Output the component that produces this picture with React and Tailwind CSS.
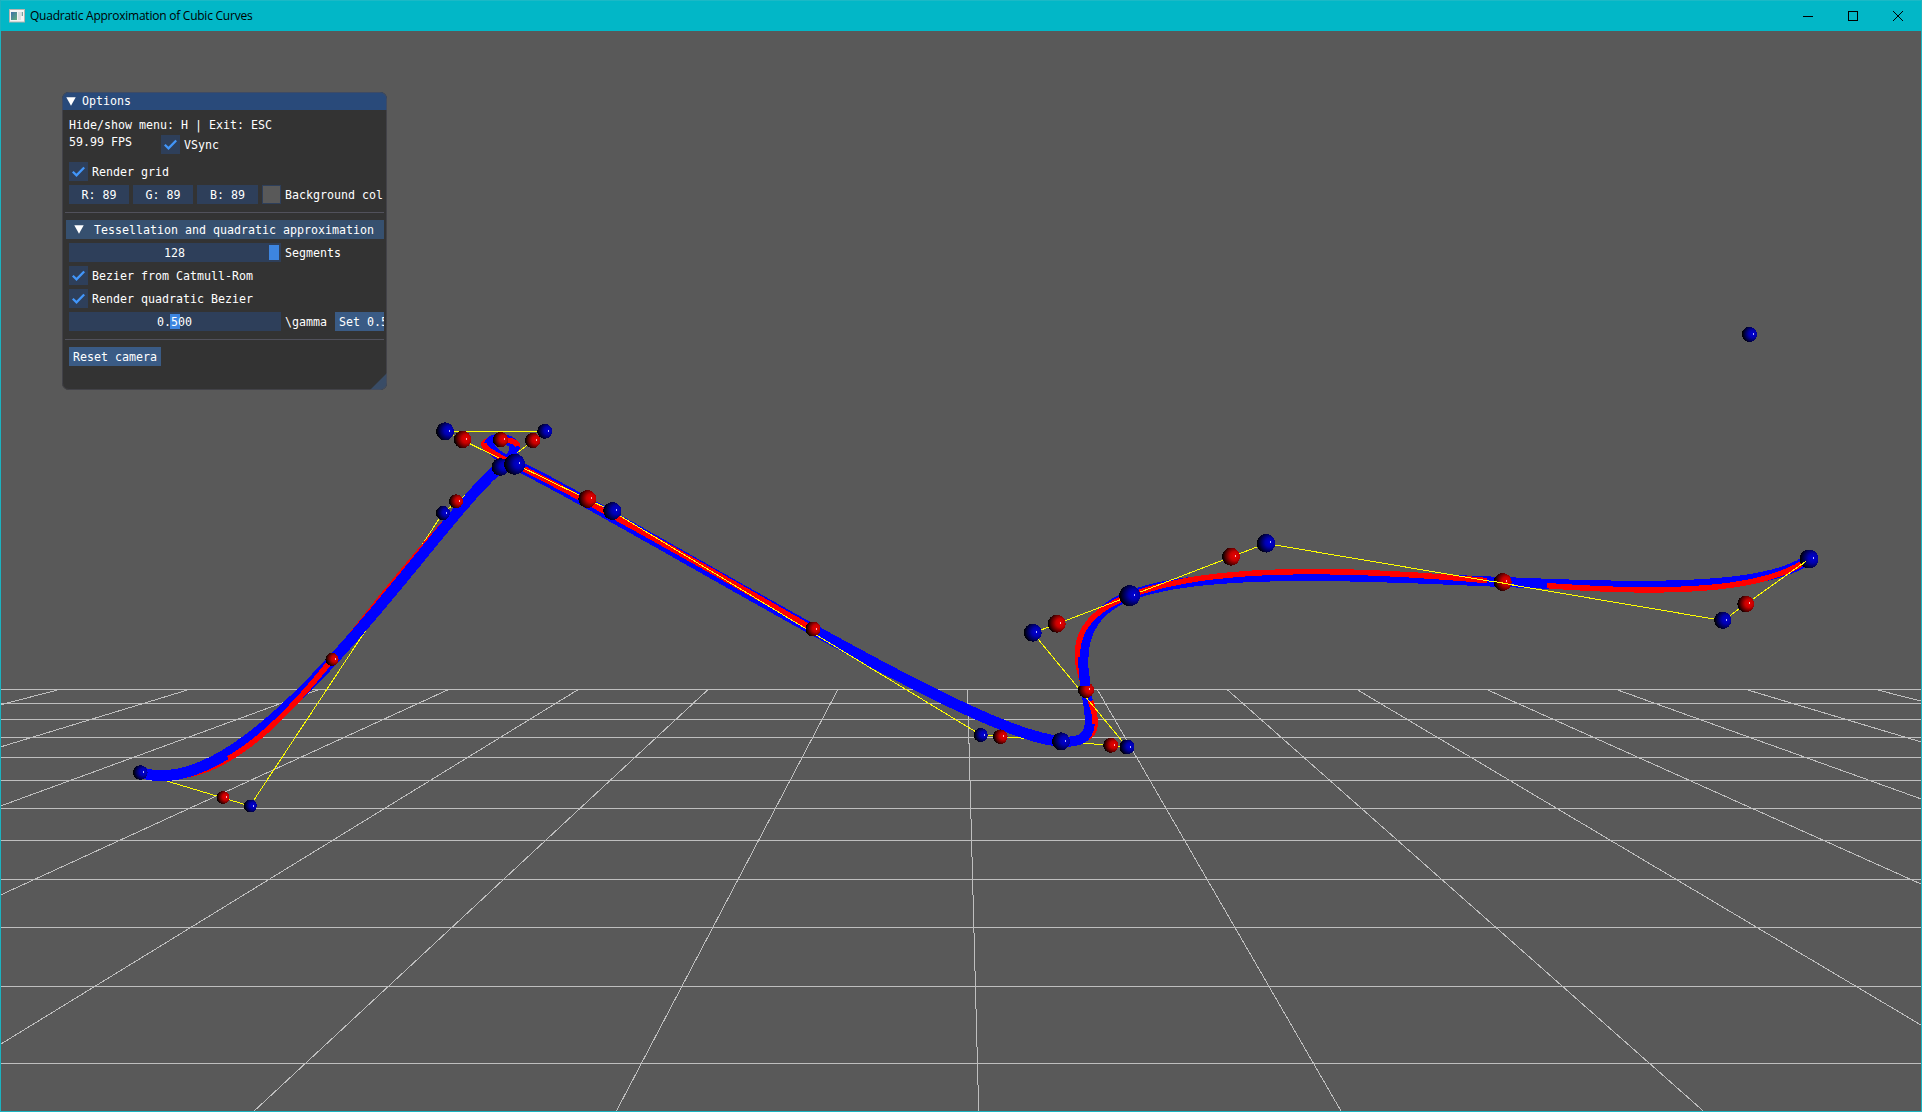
import React from "react";

const BLUE = "#0000ff";
const RED = "#ff0000";

// Projected control points: x, y and apparent radius of each marker.
const CUBICS = [
  { w: 11, p: [[140.3, 772.5, 7.3], [250.3, 806, 6.5], [443, 513, 7], [500.3, 467, 9]] },
  { w: 10, p: [[500.3, 467, 9], [544.7, 431.3, 7.5], [445, 431.3, 9], [514.7, 464.3, 10.5]] },
  { w: 11, p: [[514.7, 464.3, 10.5], [612.3, 511, 9], [980.7, 735, 7], [1061, 741.3, 9]] },
  { w: 10, p: [[1061, 741.3, 9], [1127, 747, 7.5], [1032.7, 632.7, 9], [1129.7, 595.7, 10.5]] },
  { w: 10, p: [[1129.7, 595.7, 10.5], [1266, 543.3, 9.3], [1722.7, 620.3, 8.5], [1809, 559, 9.5]] },
];

const QUADS = [
  { p: [[140.3, 772.5, 7.3], [223, 797.5, 6.4], [332, 659.3, 6.5]], over: [0.48, 1] },
  { p: [[332, 659.3, 6.5], [456, 501.3, 7.3], [500.3, 467, 9]], over: null },
  { p: [[500.3, 467, 9], [532.7, 440.5, 7.5], [500.5, 439.7, 8]], over: [0.5, 0.9] },
  { p: [[500.5, 439.7, 8], [462.5, 439.5, 8.7], [514.7, 464.3, 10.5]], over: [0.42, 1] },
  { p: [[514.7, 464.3, 10.5], [587.3, 499, 9], [813, 629, 7.5]], over: [0, 1] },
  { p: [[813, 629, 7.5], [1000.3, 736.7, 7], [1061, 741.3, 9]], over: null },
  { p: [[1061, 741.3, 9], [1110.7, 745.3, 7.5], [1086, 690, 8]], over: [0.62, 0.9] },
  { p: [[1086, 690, 8], [1056.7, 623.7, 9], [1129.7, 595.7, 10.5]], over: [0.3, 1] },
  { p: [[1129.7, 595.7, 10.5], [1231, 556.7, 9.2], [1502.7, 582, 9]], over: [0, 0.97] },
  { p: [[1502.7, 582, 9], [1745.7, 604, 8.4], [1809, 559, 9.5]], over: [0.09, 1] },
];

function sample(points, from = 0, to = 1) {
  const coef = points.length === 4 ? [1, 3, 3, 1] : [1, 2, 1];
  const deg = points.length - 1;
  const out = [];
  for (let i = 0; i <= 64; i++) {
    const t = from + ((to - from) * i) / 64;
    let x = 0, y = 0, w = 0;
    points.forEach(([px, py, r], k) => {
      const b = (coef[k] * Math.pow(t, k) * Math.pow(1 - t, deg - k)) / r;
      x += b * px;
      y += b * py;
      w += b;
    });
    out.push(`${(x / w).toFixed(1)},${(y / w).toFixed(1)}`);
  }
  return out.join(" ");
}

const HANDLES_UNDER = [
  [140, 773, 250, 806], [250, 806, 443, 513], [443, 513, 500, 467],
  [981, 735, 1061, 741], [1061, 741, 1127, 747],
];
const HANDLES_OVER = [
  [517, 453, 544, 432], [545, 431.5, 445, 431.5], [445, 431.5, 505, 461],
  [515, 464, 612, 511], [612, 511, 981, 735],
  [1127, 747, 1033, 633], [1033, 633, 1130, 596],
  [1130, 596, 1266, 543.5], [1266, 543.5, 1723, 620.5], [1723, 620.5, 1809, 559],
];

// Far markers come first so that nearer ones cover them.
const SPHERES = [
  ["b", 443, 513, 7], ["r", 456, 501.3, 7], ["r", 500.5, 439.7, 7.7],
  ["b", 500.3, 467, 8.8], ["b", 445, 431.3, 9], ["r", 462.5, 439.5, 8.7],
  ["b", 544.7, 431.3, 7.5], ["r", 532.7, 440.5, 7.7], ["b", 514.7, 464.3, 10.5],
  ["r", 587.3, 499, 9], ["b", 612.3, 511, 9], ["r", 813, 629, 7.5],
  ["b", 140.3, 772.5, 7.3], ["r", 223, 797.5, 6.4], ["b", 250.3, 806, 6.5],
  ["r", 332, 659.3, 6.6], ["b", 980.7, 735, 7], ["r", 1000.3, 736.7, 7.3],
  ["b", 1061, 741.3, 9], ["b", 1127, 747, 7.5], ["r", 1110.7, 745.3, 7.5],
  ["r", 1086, 690, 8], ["b", 1032.7, 632.7, 9], ["r", 1056.7, 623.7, 9],
  ["b", 1129.7, 595.7, 10.5], ["b", 1266, 543.3, 9.3], ["r", 1231, 556.7, 9],
  ["r", 1502.7, 582, 9], ["b", 1722.7, 620.3, 8.6], ["r", 1745.7, 604, 8.4],
  ["b", 1809, 559, 9.5], ["b", 1749.5, 334.5, 7.6],
];

const ROWS = [689, 703, 719, 737, 757, 780, 808, 840, 879, 927, 986, 1063];
const COLS = [-7, -6, -5, -4, -3, -2, -1, 0, 1, 2, 3, 4, 5, 6, 7];

const line = (l, i) => <line key={i} x1={l[0]} y1={l[1]} x2={l[2]} y2={l[3]} />;

function Scene() {
  return (
    <svg className="absolute inset-0 block" width="1920" height="1080" viewBox="1 31 1920 1080" shapeRendering="crispEdges">
      <defs>
        <radialGradient id="b" cx="0.7" cy="0.46" r="0.7">
          <stop offset="0" stopColor="#0000d8" />
          <stop offset="0.35" stopColor="#0000b0" />
          <stop offset="0.7" stopColor="#00004c" />
          <stop offset="0.95" stopColor="#000004" />
        </radialGradient>
        <radialGradient id="r" cx="0.7" cy="0.46" r="0.7">
          <stop offset="0" stopColor="#ec0000" />
          <stop offset="0.35" stopColor="#c80000" />
          <stop offset="0.7" stopColor="#580000" />
          <stop offset="0.95" stopColor="#040000" />
        </radialGradient>
      </defs>
      <g stroke="#bfbfbf" strokeWidth="1">
        {ROWS.map((y) => <line key={y} x1="1" y1={y + 0.5} x2="1921" y2={y + 0.5} />)}
        {COLS.map((k) => (
          <line key={k} x1={967.6 + 129.75 * k} y1="689.5" x2={978.7 + 362.3 * k} y2="1111" />
        ))}
      </g>
      <g stroke="#ffff00" strokeWidth="1">{HANDLES_UNDER.map(line)}</g>
      <g fill="none" stroke={RED} strokeWidth="5.5">
        {QUADS.map((q, i) => <polyline key={i} points={sample(q.p)} />)}
      </g>
      <g fill="none" stroke={BLUE}>
        {CUBICS.map((c, i) => <polyline key={i} strokeWidth={c.w} points={sample(c.p)} />)}
      </g>
      <g fill="none" stroke={RED} strokeWidth="5.5">
        {QUADS.filter((q) => q.over).map((q, i) => (
          <polyline key={i} points={sample(q.p, q.over[0], q.over[1])} />
        ))}
      </g>
      <g stroke="#ffff00" strokeWidth="1">{HANDLES_OVER.map(line)}</g>
      {SPHERES.map(([c, x, y, r], i) => (
        <g key={i}>
          <circle cx={x} cy={y} r={r} fill={c === "b" ? "url(#b)" : "url(#r)"} />
          <rect x={Math.round(x + r * 0.42)} y={Math.round(y - r * 0.2)} width="1" height="2" fill={c === "b" ? "#b4b4ff" : "#ffb4b4"} />
        </g>
      ))}
      <path d="M1080 686H1090V676H1080Z" fill={BLUE} />
      <line x1="1491" y1="581" x2="1514" y2="585" stroke="#ffff00" />
      <line x1="1800" y1="566" x2="1806" y2="561" stroke="#ffff00" />
    </svg>
  );
}

function Box() {
  return (
    <span className="flex size-[19px] shrink-0 items-center justify-center bg-[#2e3f5a]">
      <svg width="13" height="13" viewBox="0 0 13 13" fill="none" stroke="#4296fa" strokeWidth="2.3">
        <path d="M0.8 6.7 L4.5 10.3 L12.2 2.5" />
      </svg>
    </span>
  );
}

function Check({ label }) {
  return (
    <div className="flex h-[19px] items-center gap-[4px]">
      <Box />
      <span className="pt-[2px]">{label}</span>
    </div>
  );
}

function Triangle() {
  return (
    <svg className="shrink-0" width="10" height="9" viewBox="0 0 10 9"><path d="M0.3 0.3H9.7L5 8.7Z" fill="#fff" /></svg>
  );
}

function Slider({ value, grab }) {
  return (
    <div className="relative flex h-[19px] w-[212px] shrink-0 items-center justify-center bg-[#2e3f5a]">
      <span className={`absolute top-[2px] h-[15px] w-[10px] bg-[#3d85e0] ${grab}`} />
      <span className="relative pt-[2px] pr-px">{value}</span>
    </div>
  );
}

function Options() {
  return (
    <div className="absolute left-[61px] top-[61px] h-[298px] w-[325px] overflow-hidden rounded-[7px] bg-[#333333] font-['DejaVu_Sans_Mono',monospace] text-[11.63px] leading-[13px] whitespace-pre text-white">
      <div className="flex h-[18px] items-center gap-[6px] bg-[#294a7a] pl-[4px]">
        <Triangle />
        <span>Options</span>
      </div>
      <div className="flex flex-col pt-[8px] pl-[7px]">
        <div className="h-[13px] pt-px">Hide/show menu: H | Exit: ESC</div>
        <div className="mt-[4px] flex h-[19px] items-start">
          <span className="w-[92px] pt-px">59.99 FPS</span>
          <Check label="VSync" />
        </div>
        <div className="mt-[8px]"><Check label="Render grid" /></div>
        <div className="mt-[4px] flex h-[19px] items-center gap-[4px]">
          <span className="flex h-full w-[60px] shrink-0 items-center justify-center bg-[#2e3f5a] pt-[2px]">R: 89</span>
          <span className="flex h-full w-[60px] shrink-0 items-center justify-center bg-[#2e3f5a] pt-[2px]">G: 89</span>
          <span className="flex h-full w-[61px] shrink-0 items-center justify-center bg-[#2e3f5a] pt-[2px]">B: 89</span>
          <span className="size-[19px] shrink-0 border border-[#2e3f5a] bg-[#595959]" />
          <span className="pt-[2px]">Background col</span>
        </div>
      </div>
      <div className="mt-[8px] ml-[3px] h-px w-[319px] bg-[#51515b]" />
      <div className="mt-[7px] ml-[4px] flex h-[19px] w-[318px] items-center gap-[10px] bg-[#36506f] pl-[8px]">
        <Triangle />
        <span className="pt-[2px]">Tessellation and quadratic approximation</span>
      </div>
      <div className="mt-[4px] flex flex-col gap-[4px] pl-[7px]">
        <div className="flex h-[19px] items-center gap-[4px]">
          <Slider value="128" grab="right-[2px]" />
          <span className="pt-[2px]">Segments</span>
        </div>
        <Check label="Bezier from Catmull-Rom" />
        <Check label="Render quadratic Bezier" />
        <div className="flex h-[19px] w-[315px] items-center overflow-hidden">
          <Slider value="0.500" grab="left-[101px]" />
          <span className="ml-[4px] w-[50px] shrink-0 pt-[2px]">\gamma</span>
          <span className="flex h-full w-[57px] shrink-0 items-center bg-[#3a5b85] pt-[2px] pl-[4px]">Set 0.5</span>
        </div>
      </div>
      <div className="mt-[8px] ml-[3px] h-px w-[319px] bg-[#51515b]" />
      <div className="mt-[7px] ml-[7px] flex h-[19px] w-[92px] items-center justify-center bg-[#3a5b85] pt-[2px]">Reset camera</div>
      <svg className="absolute right-0 bottom-0" width="17" height="17" viewBox="0 0 17 17"><path d="M17 0V17H0Z" fill="#394c66" /></svg>
      <div className="pointer-events-none absolute inset-0 rounded-[7px] border border-[#4c4c57]/60" />
    </div>
  );
}

export default function App() {
  return (
    <div className="flex h-[1112px] w-[1922px] flex-col overflow-hidden border border-t-0 border-[#1bb3c0] bg-[#595959]">
      <header className="flex h-[31px] shrink-0 items-center justify-between border-t border-[#1bb9c6] bg-[#02b7c7] pr-[18px] pl-[8px]">
        <div className="flex items-center gap-[5px]">
          <svg width="16" height="14" viewBox="0 0 16 14">
            <defs>
              <linearGradient id="appIcon" x1="0" y1="0" x2="1" y2="1">
                <stop offset="0" stopColor="#3c6fa8" />
                <stop offset="1" stopColor="#5fae7c" />
              </linearGradient>
            </defs>
            <rect x="0.5" y="0.5" width="15" height="12.5" fill="#f4f4f4" stroke="#b9b4b0" />
            <rect x="2" y="3" width="6" height="8" fill="url(#appIcon)" />
            <rect x="9" y="3" width="3" height="8" fill="#dcdfe2" />
            <rect x="12.7" y="3" width="1.3" height="4" fill="#7ba3a0" />
          </svg>
          <h1 className="font-['Open_Sans','Noto_Sans',sans-serif] text-[12px] leading-4 font-normal tracking-[-0.24px] whitespace-nowrap text-black">Quadratic Approximation of Cubic Curves</h1>
        </div>
        <div className="flex gap-[35px] pb-px">
          <svg width="10" height="10" viewBox="0 0 10 10" shapeRendering="crispEdges"><path d="M0 5.5h10" stroke="#000" /></svg>
          <svg width="10" height="10" viewBox="0 0 10 10" shapeRendering="crispEdges"><rect x="0.5" y="0.5" width="9" height="9" fill="none" stroke="#000" /></svg>
          <svg width="10" height="10" viewBox="0 0 10 10"><path d="M0 0L10 10M10 0L0 10" stroke="#000" /></svg>
        </div>
      </header>
      <main className="relative h-[1080px] w-[1920px] overflow-hidden">
        <Scene />
        <Options />
      </main>
    </div>
  );
}
